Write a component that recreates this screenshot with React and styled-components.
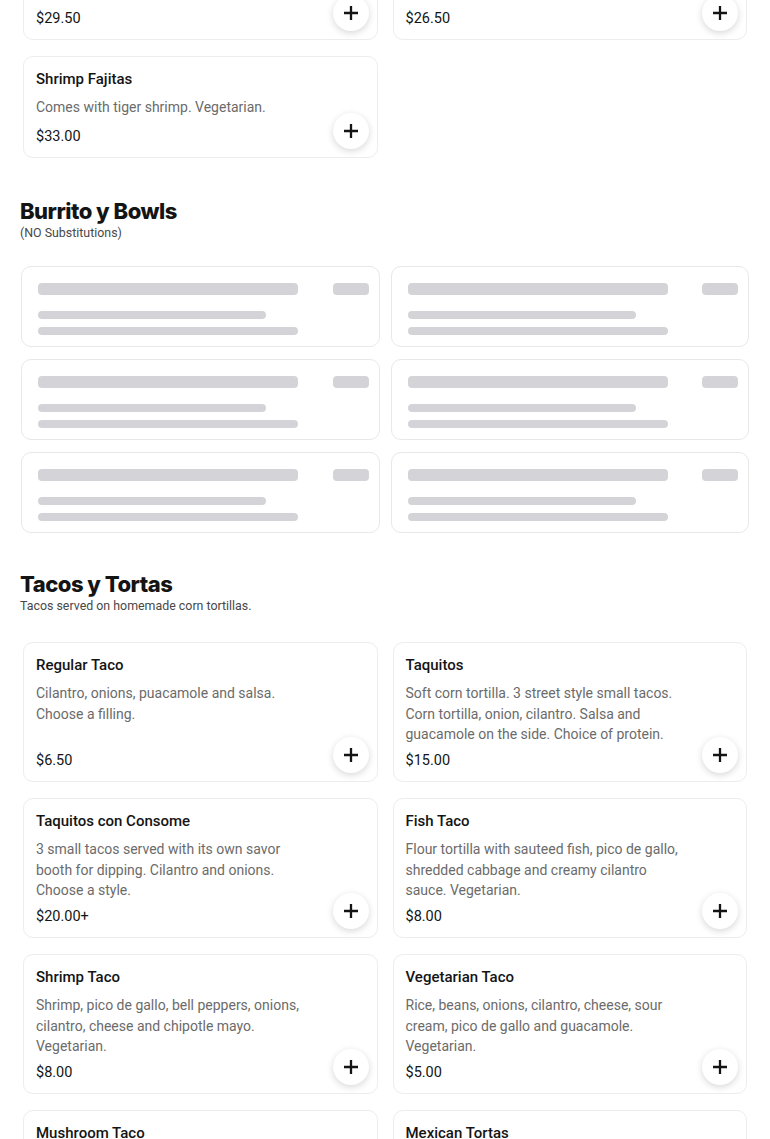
import React from 'react';
import styled, { createGlobalStyle } from 'styled-components';

const GlobalStyle = createGlobalStyle`
  *, *::before, *::after {
    box-sizing: border-box;
  }
  html, body {
    margin: 0;
    padding: 0;
    background: #ffffff;
    overflow: hidden;
  }
  body {
    font-family: Roboto, "Liberation Sans", Arial, sans-serif;
    color: #141414;
    -webkit-font-smoothing: antialiased;
  }
`;

const menu = [
  {
    title: 'Fajitas',
    subtitle: 'Served with rice, beans and tortillas.',
    items: [
      { name: 'Chicken Fajitas', desc: 'Grilled chicken with peppers.', price: '$29.50' },
      { name: 'Steak Fajitas', desc: 'Grilled steak with peppers.', price: '$26.50' },
      { name: 'Shrimp Fajitas', desc: 'Comes with tiger shrimp. Vegetarian.', price: '$33.00' },
    ],
  },
  {
    title: 'Burrito y Bowls',
    subtitle: '(NO Substitutions)',
    loading: 6,
  },
  {
    title: 'Tacos y Tortas',
    subtitle: 'Tacos served on homemade corn tortillas.',
    items: [
      { name: 'Regular Taco', desc: 'Cilantro, onions, puacamole and salsa. Choose a filling.', price: '$6.50' },
      {
        name: 'Taquitos',
        desc: 'Soft corn tortilla. 3 street style small tacos. Corn tortilla, onion, cilantro. Salsa and guacamole on the side. Choice of protein.',
        price: '$15.00',
      },
      {
        name: 'Taquitos con Consome',
        desc: '3 small tacos served with its own savor booth for dipping. Cilantro and onions. Choose a style.',
        price: '$20.00+',
      },
      {
        name: 'Fish Taco',
        desc: 'Flour tortilla with sauteed fish, pico de gallo, shredded cabbage and creamy cilantro sauce. Vegetarian.',
        price: '$8.00',
      },
      {
        name: 'Shrimp Taco',
        desc: 'Shrimp, pico de gallo, bell peppers, onions, cilantro, cheese and chipotle mayo. Vegetarian.',
        price: '$8.00',
      },
      {
        name: 'Vegetarian Taco',
        desc: 'Rice, beans, onions, cilantro, cheese, sour cream, pico de gallo and guacamole. Vegetarian.',
        price: '$5.00',
      },
      { name: 'Mushroom Taco', desc: 'Sauteed mushrooms, onions, cilantro and salsa. Vegetarian.', price: '$6.00' },
      { name: 'Mexican Tortas', desc: 'Toasted bread with beans, lettuce, tomato, avocado and cheese.', price: '$14.00' },
    ],
  },
];

const Page = styled.main`
  display: flex;
  flex-direction: column;
  gap: 35px;
  padding: 0 20px;
  margin-top: -134px;
`;

const Section = styled.section`
  display: flex;
  flex-direction: column;
`;

const Header = styled.header`
  margin-bottom: 24px;
`;

const Heading = styled.h2`
  margin: 0;
  font-family: Inter, Roboto, sans-serif;
  font-size: 22px;
  line-height: 28px;
  font-weight: 800;
  letter-spacing: -0.5px;
  color: #141414;
`;

const Subtitle = styled.p`
  margin: 0;
  font-size: 12.4px;
  line-height: 16px;
  color: #484848;
`;

const Grid = styled.div`
  display: grid;
  grid-template-columns: 1fr 1fr;
  column-gap: ${p => (p.$skeleton ? '11px' : '15px')};
  row-gap: ${p => (p.$skeleton ? '12px' : '16px')};
  padding: ${p => (p.$skeleton ? '1px 1px 2px' : '4px 3px')};
`;

const Card = styled.article`
  position: relative;
  display: flex;
  flex-direction: column;
  min-height: 102px;
  padding: 13px 12px 10.5px;
  border: 1px solid #ededed;
  border-radius: 10px;
  background: #fff;
`;

const Name = styled.h3`
  margin: 0;
  font-size: 15px;
  line-height: 18px;
  font-weight: 500;
  color: #141414;
`;

const Desc = styled.p`
  margin: 9px 0 0;
  max-width: 278px;
  font-size: 14px;
  line-height: 20.5px;
  color: #6b6b6b;
`;

const Price = styled.span`
  margin-top: auto;
  padding-top: 6px;
  font-size: 14.5px;
  line-height: 20px;
  color: #141414;
`;

const AddButton = styled.button`
  position: absolute;
  right: 8px;
  bottom: 8px;
  width: 36px;
  height: 36px;
  display: flex;
  align-items: center;
  justify-content: center;
  padding: 0;
  border: none;
  border-radius: 50%;
  background: #fff;
  box-shadow: 0 2px 7px rgba(0, 0, 0, 0.16);
  cursor: pointer;
`;

const SkeletonCard = styled.div`
  display: grid;
  grid-template-columns: 260px 1fr 36px;
  grid-template-rows: 20px 8px 8px;
  row-gap: 8px;
  padding: 16px 10px 11px 16px;
  border: 1px solid #e8e8e8;
  border-radius: 10px;
  background: #fff;
`;

const Bar = styled.div`
  grid-column: ${p => p.$col};
  align-self: start;
  width: ${p => p.$width || '100%'};
  height: ${p => p.$h}px;
  border-radius: 4px;
  background: #d4d4d8;
`;

const PlusIcon = () => (
  <svg width="16" height="16" viewBox="0 0 16 16" aria-hidden="true">
    <path d="M8 1v14M1 8h14" stroke="#141414" strokeWidth="2.3" fill="none" />
  </svg>
);

const MenuCard = ({ item }) => (
  <Card>
    <Name>{item.name}</Name>
    <Desc>{item.desc}</Desc>
    <Price>{item.price}</Price>
    <AddButton aria-label={`Add ${item.name}`}>
      <PlusIcon />
    </AddButton>
  </Card>
);

const LoadingCard = () => (
  <SkeletonCard>
    <Bar $col="1" $h={12} />
    <Bar $col="3" $h={12} />
    <Bar $col="1" $h={8} $width="228px" />
    <Bar $col="1" $h={8} />
  </SkeletonCard>
);

export default function App() {
  return (
    <>
      <GlobalStyle />
      <Page>
        {menu.map(section => (
          <Section key={section.title}>
            <Header>
              <Heading>{section.title}</Heading>
              <Subtitle>{section.subtitle}</Subtitle>
            </Header>
            {section.loading ? (
              <Grid $skeleton>
                {Array.from({ length: section.loading }, (_, i) => (
                  <LoadingCard key={i} />
                ))}
              </Grid>
            ) : (
              <Grid>
                {section.items.map(item => (
                  <MenuCard key={item.name} item={item} />
                ))}
              </Grid>
            )}
          </Section>
        ))}
      </Page>
    </>
  );
}
